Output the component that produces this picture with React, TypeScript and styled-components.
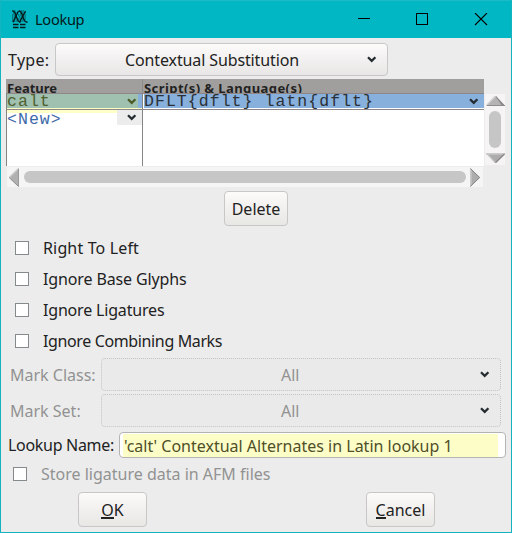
import React from 'react';
import styled, { createGlobalStyle } from 'styled-components';

const TEAL = '#00b7c3';

const GlobalStyle = createGlobalStyle`
  * { box-sizing: border-box; }
  body { margin: 0; background: #ececec; }
`;

const Window = styled.div`
  width: 512px;
  height: 533px;
  border: solid #13b3bf;
  border-width: 0 1px 1px;
  background: #ececec;
  overflow: hidden;
  color: #222;
  font: 16px/22px 'Noto Sans', sans-serif;
  white-space: pre;
`;

const TitleBar = styled.header`
  display: flex;
  align-items: center;
  height: 38px;
  padding-left: 10px;
  background: ${TEAL};
  border-top: 1px solid #1cbac5;
  color: #03191b;
`;

const Title = styled.span`
  flex: 1;
  margin-left: 6px;
  padding-bottom: 1px;
  font-size: 14.6px;
  letter-spacing: -0.3px;
`;

const WindowControls = styled.div`
  display: flex;
  width: 176px;
  svg { display: block; }
`;

const Text = styled.span<{ $ls?: number; $dim?: boolean }>`
  letter-spacing: ${(p) => p.$ls ?? 0}px;
  color: ${(p) => (p.$dim ? '#929292' : '#222')};
`;

const TypeRow = styled.div`
  display: flex;
  align-items: center;
  height: 33px;
  margin: 5px 0 3px 7px;
`;

const Label = styled.div<{ $w: number }>`
  width: ${(p) => p.$w}px;
  flex: none;
`;

const Combo = styled.div<{ $w: number; $disabled?: boolean }>`
  display: flex;
  align-items: center;
  width: ${(p) => p.$w}px;
  height: 33px;
  padding-right: 10px;
  border-radius: 4px;
  border: 1px ${(p) => (p.$disabled ? 'dotted #c4c4c4' : 'solid #c8c8c8')};
  background: ${(p) => (p.$disabled ? '#eaeaea' : 'linear-gradient(#fdfafa, #e8e7e6)')};
`;

const ComboValue = styled.div<{ $pad: number }>`
  flex: 1;
  padding-left: ${(p) => p.$pad}px;
`;

const ListArea = styled.section`
  display: grid;
  grid-template-columns: 478px 21px;
  grid-template-rows: 88px 20px;
  column-gap: 1px;
  margin-left: 5px;
`;

const Table = styled.div`
  display: flex;
  flex-direction: column;
  height: 87px;
  background: #fff;
`;

const TableRow = styled.div<{ $h: number; $kind?: 'head' | 'selected' }>`
  display: grid;
  grid-template-columns: 137px 341px;
  height: ${(p) => p.$h}px;
  background: ${(p) => (p.$kind === 'head' ? '#a09f9d' : '#fff')};
  border-bottom: ${(p) => (p.$kind ? '1px solid #8e8689' : 'none')};
`;

const HeadCell = styled.div<{ $ls?: number }>`
  height: 14px;
  overflow: hidden;
  padding-left: 1px;
  border-right: 1px solid #8d8b8b;
  font-size: 13px;
  font-weight: 700;
  line-height: 19px;
  letter-spacing: ${(p) => p.$ls ?? 0}px;
  &:last-child { border-right: 0; }
`;

const Cell = styled.div<{ $fill?: string; $color?: string; $lh?: number }>`
  display: flex;
  overflow: hidden;
  border-left: 1px solid #858585;
  border-right: 1px solid #858585;
  background: ${(p) => p.$fill ?? '#fff'};
  color: ${(p) => p.$color ?? '#2b3136'};
  font: 16.5px/${(p) => p.$lh ?? 19}px 'Liberation Mono', monospace;
  letter-spacing: 1.05px;
  &:last-child { border-left: 0; border-right: 0; padding-left: 1px; }
`;

const CellText = styled.span`
  flex: 1;
`;

const CellArrow = styled.span<{ $fill?: string }>`
  display: flex;
  align-items: center;
  width: 25px;
  height: 15px;
  padding: 0 0 1px 10px;
  background: ${(p) => p.$fill ?? 'transparent'};
`;

const VScroll = styled.div`
  display: flex;
  flex-direction: column;
  justify-content: space-between;
  align-items: center;
  width: 20px;
  height: 71px;
  margin-top: 15px;
  padding: 2px 0 2px;
  background: #f6f4f4;
`;

const HScroll = styled.div`
  display: flex;
  justify-content: space-between;
  align-items: center;
  width: 476px;
  margin-left: 1px;
  padding: 0 3px 0 2px;
  background: #f6f5f5;
`;

const Thumb = styled.div<{ $w: number; $h: number }>`
  width: ${(p) => p.$w}px;
  height: ${(p) => p.$h}px;
  border-radius: 6px;
  background: #c6c6c6;
`;

const Button = styled.button<{ $w: number }>`
  width: ${(p) => p.$w}px;
  height: 35px;
  padding: 1px 0 0;
  border: 1px solid #c8c6c6;
  border-radius: 4px;
  background: linear-gradient(#fdfafa, #e7e7e4);
  color: #222;
  font: inherit;
  text-align: center;
`;

const Mnemonic = styled.span`
  display: inline-block;
  height: 20px;
  line-height: 22px;
  border-bottom: 2px solid #222;
`;

const DeleteRow = styled.div`
  display: flex;
  padding-left: 223px;
  margin: 4px 0 6px;
`;

const CheckRow = styled.label<{ $pad: number; $gap: number; $h: number }>`
  display: flex;
  align-items: center;
  gap: ${(p) => p.$gap}px;
  height: ${(p) => p.$h}px;
  padding-left: ${(p) => p.$pad}px;
`;

const Box = styled.span`
  width: 14px;
  height: 14px;
  border: 1px solid #858a8c;
  background: #fff;
`;

const Marks = styled.div`
  display: grid;
  gap: 3px;
  margin: 2px 0 0 9px;
`;

const MarkRow = styled.div`
  display: flex;
  align-items: center;
`;

const NameRow = styled.div`
  display: flex;
  align-items: center;
  margin: 5px 0 0 7px;
`;

const Field = styled.div`
  width: 387px;
  height: 26px;
  padding: 1px 7px 0 3px;
  border: 1px solid #b4b4b4;
  border-radius: 4px;
  background: #fff;
`;

const FieldText = styled.div`
  height: 23px;
  padding-left: 1px;
  line-height: 25px;
  background: #fdfdc8;
  color: #4f4f28;
`;

const Actions = styled.footer`
  display: flex;
  justify-content: space-between;
  padding: 2px 76px 0 77px;
`;

const Chevron = ({ color = '#242c32' }: { color?: string }) => (
  <svg width="10" height="7" viewBox="0 0 10 7">
    <path d="M1 1.2 L4.7 4.8 L8.4 1.2" fill="none" stroke={color} strokeWidth="2.3" />
  </svg>
);

const AppIcon = () => (
  <svg width="18" height="19" viewBox="0 0 18 19" fill="none" stroke="#06191b">
    <path d="M1 1h4M8 1h5M2 3h5M9 3h6M1 5h4M7 5h8M1 7h5M8 7h7M1 9h4M7 9h8M1 11h6M9 11h5" strokeWidth="1" strokeDasharray="1.4 .7" opacity=".8" />
    <path d="M1.5 1.2 C6 .2 4.5 12.2 9.5 12.3 M8 1.2 C12.5 .2 10.5 12.5 16.5 12.3" strokeWidth="1.4" />
    <path d="M7.5 1 L2 12.3 M14.5 1 L8.5 12.3" strokeWidth="1.3" />
    <path d="M2 14.5h5.5M9 14.5h5.5M2 17.5h5.5M9 17.5h5.5" strokeWidth="1.5" />
  </svg>
);

const TriUp = () => (
  <svg width="19" height="10" viewBox="0 0 19 10">
    <path d="M9.5 0 L0 10 H19Z" fill="#b4b4b4" />
    <path d="M9.5 0 L19 10 L16 9Z" fill="#858585" stroke="#858585" strokeWidth=".7" />
    <path d="M9.5 0 L0 10" stroke="#d0d0d0" strokeWidth="1.5" />
    <path d="M1 9.5H19" stroke="#8d8d8d" />
  </svg>
);

const TriDown = () => (
  <svg width="19" height="10" viewBox="0 0 19 10">
    <path d="M0 0 H19 L9.5 10Z" fill="#acacac" />
    <path d="M0 .8H19" stroke="#cbcbcb" strokeWidth="1.6" />
    <path d="M0 0 L9.5 10" stroke="#c9c9c9" strokeWidth="1.2" />
    <path d="M18.5 1 L9.5 9.7" stroke="#858585" strokeWidth="1.3" />
  </svg>
);

const TriLeft = () => (
  <svg width="10" height="19" viewBox="0 0 10 19">
    <path d="M0 9.5 L10 0 V19Z" fill="#b0b0b0" />
    <path d="M.3 9.5 L9.5 .5" stroke="#cbcbcb" strokeWidth="1.4" />
    <path d="M.3 9.7 L9.5 18.5" stroke="#8d8d8d" />
    <path d="M9.5 1V18" stroke="#9a9a9a" />
  </svg>
);

const TriRight = () => (
  <svg width="10" height="19" viewBox="0 0 10 19">
    <path d="M0 0 L10 9.5 L0 19Z" fill="#adadad" />
    <path d="M.8 1V18" stroke="#c9c9c9" strokeWidth="1.6" />
    <path d="M.5 18.3 L9.6 9.5 L.5 .6" fill="none" stroke="#858585" strokeWidth="1" />
  </svg>
);

const flags = [
  { text: 'Right To Left', ls: 0.15 },
  { text: 'Ignore Base Glyphs', ls: -0.13 },
  { text: 'Ignore Ligatures', ls: -0.18 },
  { text: 'Ignore Combining Marks', ls: -0.37 },
];

export default function App() {
  return (
    <>
      <GlobalStyle />
      <Window>
        <TitleBar>
          <AppIcon />
          <Title>Lookup</Title>
          <WindowControls>
            <svg width="176" height="13" viewBox="0 0 176 13" fill="none" stroke="#000" shapeRendering="crispEdges">
              <path d="M23 5.5h12M81.5 .5h11v11h-11z" />
              <path d="M140 0l12 12M152 0l-12 12" strokeWidth="1.1" shapeRendering="auto" />
            </svg>
          </WindowControls>
        </TitleBar>

        <TypeRow>
          <Label $w={47}><Text $ls={0.3}>Type:</Text></Label>
          <Combo $w={333}>
            <ComboValue $pad={69}><Text $ls={-0.12}>Contextual Substitution</Text></ComboValue>
            <Chevron />
          </Combo>
        </TypeRow>

        <ListArea>
          <Table>
            <TableRow $h={15} $kind="head">
              <HeadCell>Feature</HeadCell>
              <HeadCell $ls={0.42}>Script(s) &amp; Language(s)</HeadCell>
            </TableRow>
            <TableRow $h={16} $kind="selected">
              <Cell $lh={16} $fill="linear-gradient(90deg, #a0c0b0 131px, #88b0dc 131px) 0 0 / 100% 14px no-repeat, #ffffc4" $color="#4f5e2c">
                <CellText>calt</CellText>
                <CellArrow><Chevron color="#4b5a26" /></CellArrow>
              </Cell>
              <Cell $lh={16} $fill="linear-gradient(#88b0dc, #88b0dc) 1px 0 / 100% 14px no-repeat, #fff">
                <CellText>DFLT&#123;dflt&#125; latn&#123;dflt&#125;</CellText>
                <CellArrow><Chevron /></CellArrow>
              </Cell>
            </TableRow>
            <TableRow $h={56}>
              <Cell $fill="linear-gradient(#ffffc8, #ffffc8) 0 0 / 100% 3px no-repeat, #fff" $color="#3d69a8">
                <CellText>&lt;New&gt;</CellText>
                <CellArrow $fill="#ececec"><Chevron /></CellArrow>
              </Cell>
              <Cell />
            </TableRow>
          </Table>
          <VScroll>
            <TriUp />
            <Thumb $w={12} $h={37} />
            <TriDown />
          </VScroll>
          <HScroll>
            <TriLeft />
            <Thumb $w={442} $h={12} />
            <TriRight />
          </HScroll>
        </ListArea>

        <DeleteRow><Button $w={64}>Delete</Button></DeleteRow>

        {flags.map((f) => (
          <CheckRow key={f.text} $pad={14} $gap={14} $h={31}>
            <Box />
            <Text $ls={f.ls}>{f.text}</Text>
          </CheckRow>
        ))}

        <Marks>
          {['Mark Class:', 'Mark Set:'].map((name) => (
            <MarkRow key={name}>
              <Label $w={91}><Text $dim>{name}</Text></Label>
              <Combo $w={400} $disabled>
                <ComboValue $pad={179}><Text $dim>All</Text></ComboValue>
                <Chevron />
              </Combo>
            </MarkRow>
          ))}
        </Marks>

        <NameRow>
          <Label $w={111}><Text $ls={-0.3}>Lookup Name:</Text></Label>
          <Field><FieldText>'calt' Contextual Alternates in Latin lookup 1</FieldText></Field>
        </NameRow>

        <CheckRow $pad={12} $gap={14} $h={32}>
          <Box />
          <Text $dim>Store ligature data in AFM files</Text>
        </CheckRow>

        <Actions>
          <Button $w={69}><Mnemonic>O</Mnemonic>K</Button>
          <Button $w={69}><Mnemonic>C</Mnemonic>ancel</Button>
        </Actions>
      </Window>
    </>
  );
}
